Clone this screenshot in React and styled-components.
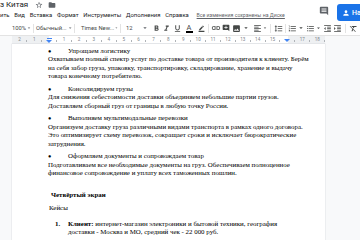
import React from 'react';
import styled, { createGlobalStyle } from 'styled-components';
import {
  MdStarBorder, MdFolder, MdComment, MdPerson, MdArrowDropDown,
  MdFormatBold, MdFormatItalic, MdFormatUnderlined, MdBorderColor, MdLink,
  MdAddComment, MdInsertPhoto, MdFormatAlignLeft, MdFormatLineSpacing,
  MdFormatListNumbered, MdFormatListBulleted, MdFormatIndentDecrease,
  MdFormatIndentIncrease, MdFormatClear,
} from 'react-icons/md';

const Global = createGlobalStyle`
  html, body { margin: 0; padding: 0; background: #fff; overflow: hidden; }
  body { font-family: Roboto, "Noto Sans", sans-serif; }
`;

const Root = styled.div`
  width: 360px;
  height: 240px;
  overflow: hidden;
  display: flex;
  flex-direction: column;
  background: #fff;
`;

const Header = styled.div`
  display: flex;
  align-items: flex-start;
  height: 21px;
  overflow: hidden;
  flex: none;
`;

const HeaderMain = styled.div`
  flex: 1;
  min-width: 0;
  display: flex;
  flex-direction: column;
`;

const TitleRow = styled.div`
  display: flex;
  align-items: center;
  height: 10px;
  gap: 3px;
`;

const Title = styled.span`
  font-size: 8px;
  line-height: 10px;
  color: #202124;
  margin-right: 4px;
  white-space: nowrap;
`;

const TitleIcon = styled.span`
  display: inline-flex;
  color: ${p => p.$c || '#5f6368'};
  font-size: ${p => p.$s || 9}px;
  margin-left: ${p => p.$ml || 0}px;
`;

const MenuRow = styled.div`
  display: flex;
  align-items: center;
  height: 10px;
  gap: 4.8px;
  white-space: nowrap;
`;

const MenuItem = styled.span`
  font-size: 5.9px;
  color: #202124;
  line-height: 10px;
`;

const SaveLink = styled.span`
  font-size: 5.2px;
  color: #5f6368;
  text-decoration: underline;
  margin-left: 3px;
  line-height: 10px;
`;

const HeaderRight = styled.div`
  flex: none;
  display: flex;
  align-items: center;
  gap: 8px;
  padding-top: 4px;
  margin-right: -62px;
`;

const CommentIcon = styled.span`
  display: inline-flex;
  color: #5f6368;
  font-size: 10px;
  margin-top: -3px;
`;

const ShareButton = styled.div`
  width: 85px;
  height: 17px;
  border-radius: 3px;
  background: #1a73e8;
  color: #fff;
  display: flex;
  align-items: center;
  gap: 2px;
  padding-left: 5px;
  box-sizing: border-box;
  font-size: 7px;
  font-weight: 500;
  white-space: nowrap;
  svg { font-size: 8px; }
`;

const Toolbar = styled.div`
  display: flex;
  align-items: center;
  height: 14px;
  flex: none;
  border-bottom: 1px solid #e3e3e3;
  overflow: hidden;
  white-space: nowrap;
  color: #444746;
`;

const Spacer = styled.span`
  flex: none;
  width: ${p => p.$w}px;
`;

const Drop = styled.span`
  flex: none;
  display: flex;
  align-items: center;
  justify-content: space-between;
  width: ${p => p.$w}px;
  padding-left: ${p => p.$pl}px;
  box-sizing: border-box;
  font-size: 5.8px;
  color: #444746;
  svg { font-size: 8px; color: #5f6368; }
`;

const Tool = styled.span`
  flex: none;
  display: inline-flex;
  align-items: center;
  justify-content: center;
  width: ${p => p.$w}px;
  height: 12px;
  font-size: ${p => p.$s || 9}px;
  color: #444746;
`;

const ColorA = styled.span`
  display: inline-flex;
  flex-direction: column;
  align-items: center;
  font-size: 7.5px;
  line-height: 7px;
  color: #444746;
  &::after {
    content: '';
    width: 7px;
    height: 1.5px;
    background: #000;
    margin-top: 0.5px;
  }
`;

const Sep = styled.span`
  flex: none;
  width: 1px;
  height: 9px;
  background: #e3e3e3;
  margin: 0 ${p => p.$m || 1.5}px;
`;

const RulerRow = styled.div`
  display: flex;
  height: 8px;
  flex: none;
  background: #f8f9fa;
`;

const RulerGutter = styled.div`
  width: 12px;
  flex: none;
`;

const Ruler = styled.div`
  width: 313px;
  flex: none;
  display: flex;
  background: linear-gradient(to right, #eef0f2 0 37px, #fff 37px 276px, #eef0f2 276px);
  border-bottom: 1px solid #e8eaed;
  box-sizing: border-box;
`;

const RulerCell = styled.span`
  position: relative;
  width: 14.9px;
  flex: none;
  display: flex;
  align-items: center;
  justify-content: center;
  font-size: 4.6px;
  color: #80868b;
  &::after {
    content: '';
    position: absolute;
    right: 0;
    bottom: 1px;
    width: 0.6px;
    height: 2px;
    background: #b0b4b8;
  }
`;

const Marker = styled.span`
  display: flex;
  flex-direction: column;
  align-items: center;
  margin-top: 1px;
  &::before {
    content: '';
    display: ${p => (p.$bar ? 'block' : 'none')};
    width: 5px;
    height: 1.5px;
    background: #4285f4;
    margin-bottom: 0.5px;
  }
  &::after {
    content: '';
    width: 0;
    height: 0;
    border-left: 3px solid transparent;
    border-right: 3px solid transparent;
    border-top: 3.5px solid #4285f4;
  }
`;

const Workspace = styled.div`
  flex: 1;
  display: flex;
  background: #f8f9fa;
  min-height: 0;
`;

const Gutter = styled.div`
  width: 12px;
  flex: none;
`;

const Page = styled.div`
  width: 313px;
  flex: none;
  background: #fff;
  box-shadow: 0 0 0 0.5px #e0e2e5;
  box-sizing: border-box;
  padding: 2.8px 37px 0 36px;
  font-family: "Liberation Serif", "Times New Roman", serif;
  font-size: 6.9px;
  line-height: 8.4px;
  color: #000;
  white-space: nowrap;
`;

const SidePanel = styled.div`
  flex: 1;
  background: #f8f9fa;
  border-left: 1px solid #eceef0;
`;

const Para = styled.div`
  margin-top: ${p => p.$mt || 0}px;
  padding-left: ${p => p.$pl || 0}px;
  font-weight: ${p => (p.$bold ? 700 : 400)};
`;

const ListItem = styled.div`
  display: flex;
  margin-top: ${p => p.$mt || 0}px;
`;

const Mark = styled.span`
  flex: none;
  width: ${p => p.$w}px;
  padding-left: ${p => p.$pl || 0}px;
  box-sizing: border-box;
  font-size: ${p => p.$fs || 6.9}px;
  font-weight: ${p => (p.$bold ? 700 : 400)};
`;

const Bold = styled.b`
  font-weight: 700;
`;

const menu = ['ить', 'Вид', 'Вставка', 'Формат', 'Инструменты', 'Дополнения', 'Справка'];

const rulerNums = Array.from({ length: 21 }, (_, i) => i - 2);

function Bullet({ children, mt }) {
  return (
    <ListItem $mt={mt}>
      <Mark $w={20} $fs={5.5}>●</Mark>
      <span>{children}</span>
    </ListItem>
  );
}

export default function App() {
  return (
    <Root>
      <Global />
      <Header>
        <HeaderMain>
          <TitleRow>
            <Title>з Китая</Title>
            <TitleIcon $s={8}><MdStarBorder /></TitleIcon>
            <TitleIcon $s={8} $ml={2}><MdFolder /></TitleIcon>
          </TitleRow>
          <MenuRow>
            {menu.map(m => <MenuItem key={m}>{m}</MenuItem>)}
            <SaveLink>Все изменения сохранены на Диске</SaveLink>
          </MenuRow>
        </HeaderMain>
        <HeaderRight>
          <CommentIcon><MdComment /></CommentIcon>
          <ShareButton><MdPerson />Настройки доступа</ShareButton>
        </HeaderRight>
      </Header>

      <Toolbar>
        <Spacer $w={9} />
        <Drop $w={23} $pl={3}>100%<MdArrowDropDown /></Drop>
        <Sep $m={1} />
        <Drop $w={38} $pl={1}>Обычный...<MdArrowDropDown /></Drop>
        <Sep $m={1} />
        <Drop $w={43} $pl={5}>Times New...<MdArrowDropDown /></Drop>
        <Sep $m={1} />
        <Drop $w={27} $pl={4}>12<MdArrowDropDown /></Drop>
        <Spacer $w={2} />
        <Tool $w={10}><MdFormatBold /></Tool>
        <Tool $w={11}><MdFormatItalic /></Tool>
        <Tool $w={10}><MdFormatUnderlined /></Tool>
        <Tool $w={14}><ColorA>A</ColorA></Tool>
        <Tool $w={10} $s={7}><MdBorderColor /></Tool>
        <Sep />
        <Tool $w={12} $s={10}><MdLink /></Tool>
        <Tool $w={8} $s={8}><MdAddComment /></Tool>
        <Tool $w={12}><MdInsertPhoto /></Tool>
        <Tool $w={8} $s={8}><MdArrowDropDown /></Tool>
        <Spacer $w={2} />
        <Tool $w={10}><MdFormatAlignLeft /></Tool>
        <Tool $w={6} $s={8}><MdArrowDropDown /></Tool>
        <Sep $m={2} />
        <Tool $w={10}><MdFormatLineSpacing /></Tool>
        <Sep />
        <Tool $w={10}><MdFormatListNumbered /></Tool>
        <Tool $w={8} $s={8}><MdArrowDropDown /></Tool>
        <Tool $w={10}><MdFormatListBulleted /></Tool>
        <Tool $w={7} $s={8}><MdArrowDropDown /></Tool>
        <Tool $w={10}><MdFormatIndentDecrease /></Tool>
        <Tool $w={10}><MdFormatIndentIncrease /></Tool>
        <Sep $m={2.5} />
        <Tool $w={10}><MdFormatClear /></Tool>
      </Toolbar>

      <RulerRow>
        <RulerGutter />
        <Ruler>
          {rulerNums.map(n => (
            <RulerCell key={n}>
              {n === 0 ? <Marker $bar /> : n === 16 ? <Marker /> : Math.abs(n)}
            </RulerCell>
          ))}
        </Ruler>
      </RulerRow>

      <Workspace>
        <Gutter />
        <Page>
          <Bullet>Упрощаем логистику</Bullet>
          <Para>
            Охватываем полный спектр услуг по доставке товара от производителя к клиенту. Берём<br />
            на себя забор груза, упаковку, транспортировку, складирование, хранение и выдачу<br />
            товара конечному потребителю.
          </Para>
          <Bullet mt={4.4}>Консолидируем грузы</Bullet>
          <Para>
            Для снижения себестоимости доставки объединяем небольшие партии грузов.<br />
            Доставляем сборный груз от границы в любую точку России.
          </Para>
          <Bullet mt={4.4}>Выполняем мультимодальные перевозки</Bullet>
          <Para>
            Организуем доставку груза различными видами транспорта в рамках одного договора.<br />
            Это оптимизирует схему перевозок, сокращает сроки и исключает бюрократические<br />
            затруднения.
          </Para>
          <Bullet mt={4.4}>Оформляем документы и сопровождаем товар</Bullet>
          <Para>
            Подготавливаем все необходимые документы на груз. Обеспечиваем полноценное<br />
            финансовое сопровождение и уплату всех таможенных пошлин.
          </Para>
          <Para $mt={13.2} $pl={3} $bold>Четвёртый экран</Para>
          <Para $mt={4.6} $pl={1}>Кейсы</Para>
          <ListItem $mt={7.6}>
            <Mark $w={20} $pl={7} $bold>1.</Mark>
            <span>
              <Bold>Клиент:</Bold> интернет-магазин электроники и бытовой техники, география<br />
              доставки - Москва и МО, средний чек - 22 000 руб.
            </span>
          </ListItem>
        </Page>
        <SidePanel />
      </Workspace>
    </Root>
  );
}
